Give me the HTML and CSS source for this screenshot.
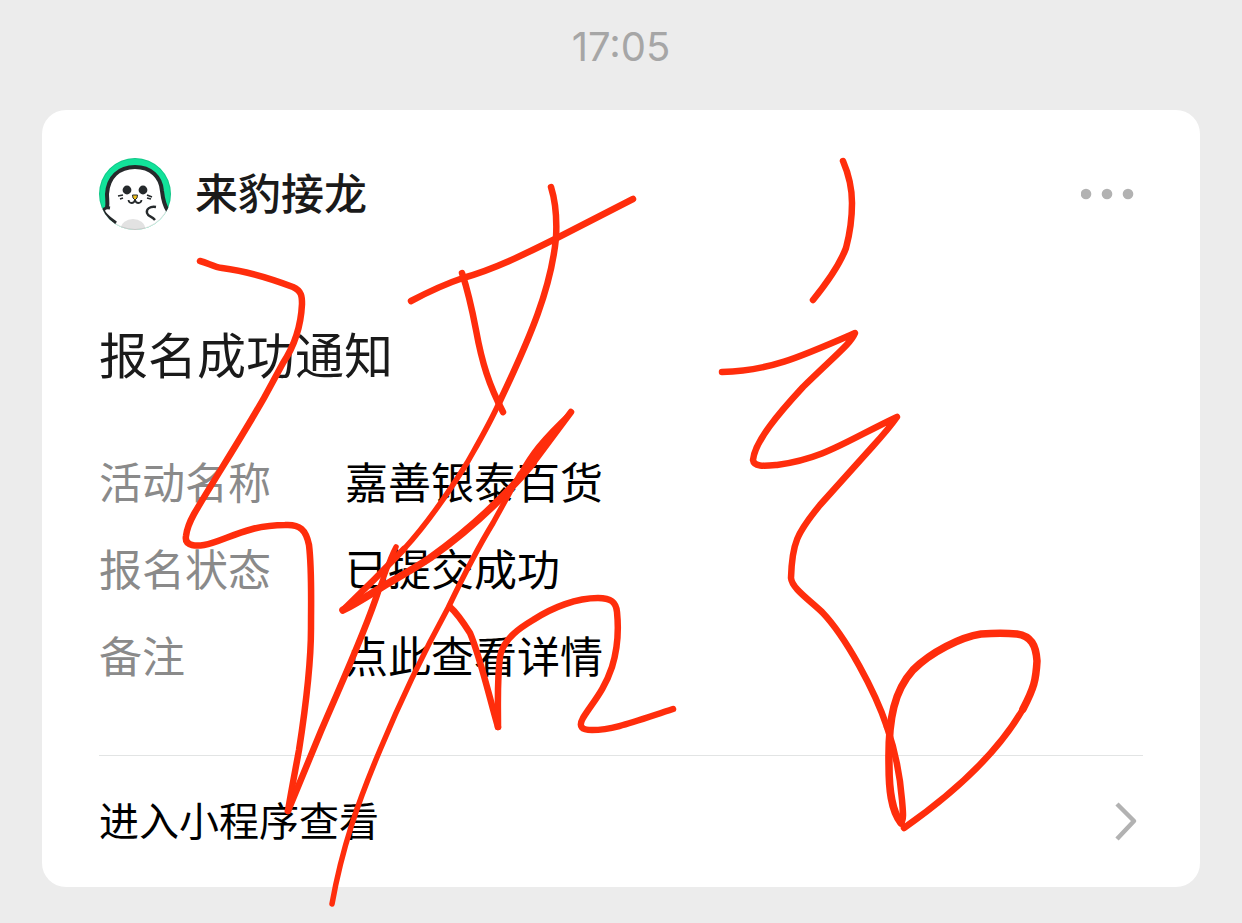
FILE: index.html
```html
<!DOCTYPE html>
<html lang="zh-CN">
<head>
    <meta charset="UTF-8">
    <meta name="viewport" content="width=device-width, initial-scale=1.0">
    <title>报名成功通知</title>
    <link rel="stylesheet" href="styles.css">
</head>
<body>
    <main class="chat">
        <time class="chat-time">17:05</time>

        <article class="card">
            <header class="card-header">
                <svg class="avatar" viewBox="0 0 72 72" aria-hidden="true">
                    <clipPath id="avatarClip"><circle cx="36" cy="36" r="36"/></clipPath>
                    <g clip-path="url(#avatarClip)">
                        <rect width="72" height="72" fill="#12e29a"/>
                        <path d="M-2 52 L5 50 C9 49 8 42 8 36 C9 19 20 9 36 9 C52 9 62 19 63 33 C64 42 65 47 69 53 L74 54 V74 H-2 Z" fill="#fff"/>
                        <path d="M8 50 C9 45 8 41 8 36 C9 19 20 9 36 9 C52 9 62 19 63 33 C64 42 65 47 69 53" fill="none" stroke="#262a2c" stroke-width="4"/>
                        <path d="M11 50 C5 49 4 52 5 54 C7 58 12 61 17 65" fill="none" stroke="#262a2c" stroke-width="3"/>
                        <ellipse cx="34" cy="70" rx="12" ry="9" fill="#e2e2e2"/>
                        <circle cx="28" cy="32" r="4.4" fill="#262a2c"/>
                        <circle cx="44" cy="32" r="4.4" fill="#262a2c"/>
                        <path d="M29.5 42 C30 46 35 46 36 42 C37 46 42 46 42.500 42" fill="none" stroke="#262a2c" stroke-width="1.8"/>
                        <path d="M33.500 37 H38.500 L38 40 L36 42 L34 40 Z" fill="#f2c11c" stroke="#262a2c" stroke-width="1"/>
                        <path d="M19 38 L24 37 M21 41 L24 40 M48 37 L53 39 M48 40 L52 41" stroke="#262a2c" stroke-width="1.6"/>
                        <path d="M57 49 C51 48 47 51 48 55 C49 59 53 58 56 62" fill="none" stroke="#262a2c" stroke-width="2.4"/>
                    </g>
                    <circle cx="36" cy="36" r="35.5" fill="none" stroke="#000" stroke-opacity="0.12"/>
                </svg>
                <h1 class="card-name">来豹接龙</h1>
                <button class="more" type="button" aria-label="更多">
                    <svg width="54" height="12" viewBox="0 0 54 12" aria-hidden="true">
                        <circle cx="5" cy="6" r="5.3"/>
                        <circle cx="26" cy="6" r="5.3"/>
                        <circle cx="47" cy="6" r="5.3"/>
                    </svg>
                </button>
            </header>

            <h2 class="card-title">报名成功通知</h2>

            <dl class="details">
                <dt>活动名称</dt>
                <dd>嘉善银泰百货</dd>
                <dt>报名状态</dt>
                <dd>已提交成功</dd>
                <dt>备注</dt>
                <dd>点此查看详情</dd>
            </dl>

            <a class="card-link" href="#">
                <span>进入小程序查看</span>
                <svg width="24" height="40" viewBox="0 0 24 40" aria-hidden="true">
                    <path d="M3 2 L20 19 L3 37" fill="none" stroke="#b2b2b2" stroke-width="4.5" stroke-linejoin="round"/>
                </svg>
            </a>
        </article>

        <!-- handwritten marks over the card -->
        <svg class="ink" viewBox="0 0 1242 923" aria-hidden="true">
            <path class="pen" d="M200 261 C208 263 214 267 222 268 C246 271 272 279 293 287 C302 291 302 297 302 304 C301 325 295 345 283 363 L264 398 C240 440 212 483 194 514 C189 523 187 528 186 536 C184 547 198 546 204 545 C224 542 245 525 285 525 C300 524 306 530 309 545 C312 570 311 600 311 628 C311 665 306 705 299 750 C295 772 291 792 288 811"/>
            <path class="pen" d="M288 811 L321 731 C345 675 365 632 378 592"/>
            <path class="pen thin" d="M378 592 C385 575 389 560 396 547"/>

            <path class="pen" d="M411 301 C430 291 445 284 463 278 C495 269 525 254 555 239 L633 199"/>
            <path class="pen" d="M462 273 C468 291 472 309 476 330 C482 363 489 385 503 412"/>

            <path class="pen" d="M551 187 C556 203 557 220 556 238 C551 288 531 336 499 403"/>
            <path class="pen thin" d="M499 403 C489 425 480 440 467 463 C447 495 428 523 404 549"/>
            <path class="pen" d="M404 549 C385 569 364 590 343 610"/>
            <path class="pen thick" d="M343 610 C357 603 369 595 382 587 C399 577 415 568 430 558 C468 531 503 499 533 463"/>
            <path class="pen" d="M533 463 L571 412"/>
            <path class="pen wedge" d="M571 412 L533 463 L512 488 L520 474 C530 455 541 440 571 412 Z"/>
            <path class="pen thin" d="M520 474 L493 523 C474 554 463 577 448 608 C425 650 402 697 380 750 C358 802 342 848 332 904"/>

            <path class="pen" d="M450 607 C457 613 463 622 470 633 C480 656 490 700 498 727"/>
            <path class="pen" d="M498 727 C498 700 497 680 500 657 C503 638 523 626 533 620 C553 607 577 598 598 598 C611 598 616 602 617 612 C619 632 618 648 612 667 C604 691 593 702 583 718 C578 727 582 730 592 730 C613 730 633 722 673 709"/>

            <path class="pen" d="M843 161 C849 175 852 189 852 203 C852 220 850 233 846 248 C840 264 830 279 813 300"/>
            <path class="pen" d="M722 372 C769 371 800 357 855 333 C851 343 839 352 803 387 C779 413 755 441 753 460 C754 467 764 466 777 465 C824 459 848 440 897 417 C890 427 883 435 873 446 L820 505 C797 533 792 543 791 578 C792 588 807 598 822 612 C846 637 875 691 887 727"/>
            <path class="pen" d="M887 727 C895 750 900 775 902 800 C903 812 904 819 901 823"/>
            <path class="pen thick" d="M901 823 C891 810 889 789 889 765 C888 717 895 690 913 670 C931 652 961 637 981 634 C993 633 1008 633 1017 634 C1031 636 1036 645 1037 661 C1036 680 1034 688 1023 709"/>
            <path class="pen" d="M1023 709 C1000 749 961 788 904 828"/>
        </svg>
    </main>
</body>
</html>
```

FILE: styles.css
```css
* {
    box-sizing: border-box;
}

body {
    margin: 0;
    background: #ececec;
    color: #000;
    font-family: Inter, "Noto Sans CJK SC", sans-serif;
}

.chat {
    position: relative;
    padding: 0 42px 36px;
}

.chat-time {
    display: block;
    padding: 17px 0 33px;
    font-size: 40px;
    line-height: 60px;
    text-align: center;
    color: #a6a6a6;
}

.card {
    padding: 48px 57px 0;
    background: #fff;
    border-radius: 24px;
}

.card-header {
    display: flex;
    align-items: center;
    gap: 24px;
}

.avatar {
    width: 72px;
    height: 72px;
}

.card-name {
    flex: 1;
    margin: 0;
    font-size: 43px;
    line-height: 72px;
    font-weight: 500;
    color: #1a1a1a;
}

.more {
    display: flex;
    padding: 8px;
    border: none;
    background: none;
    cursor: pointer;
    fill: #b2b2b2;
}

.card-title {
    margin: 93px 0 49px;
    font-size: 49px;
    line-height: 68px;
    font-weight: 400;
    color: #1a1a1a;
}

.details {
    display: grid;
    grid-template-columns: 203px 1fr;
    column-gap: 43px;
    margin: 0;
    padding-bottom: 54px;
    border-bottom: 1px solid #e2e4e4;
    font-size: 43px;
    line-height: 87px;
}

.details dt {
    color: #8a8a8a;
}

.details dd {
    margin: 0;
}

.card-link {
    display: flex;
    justify-content: space-between;
    align-items: center;
    padding-right: 5px;
    font-size: 40px;
    line-height: 131px;
    color: inherit;
    text-decoration: none;
}

.ink {
    position: absolute;
    top: 0;
    left: 0;
    width: 100%;
    pointer-events: none;
}

.pen {
    fill: none;
    stroke: #ff2d0c;
    stroke-width: 6.5;
    stroke-linecap: round;
    stroke-linejoin: round;
}

.pen.thin {
    stroke-width: 5.5;
}

.pen.thick {
    stroke-width: 7.5;
}

.pen.wedge {
    fill: #ff2d0c;
    stroke-width: 4;
}
```
